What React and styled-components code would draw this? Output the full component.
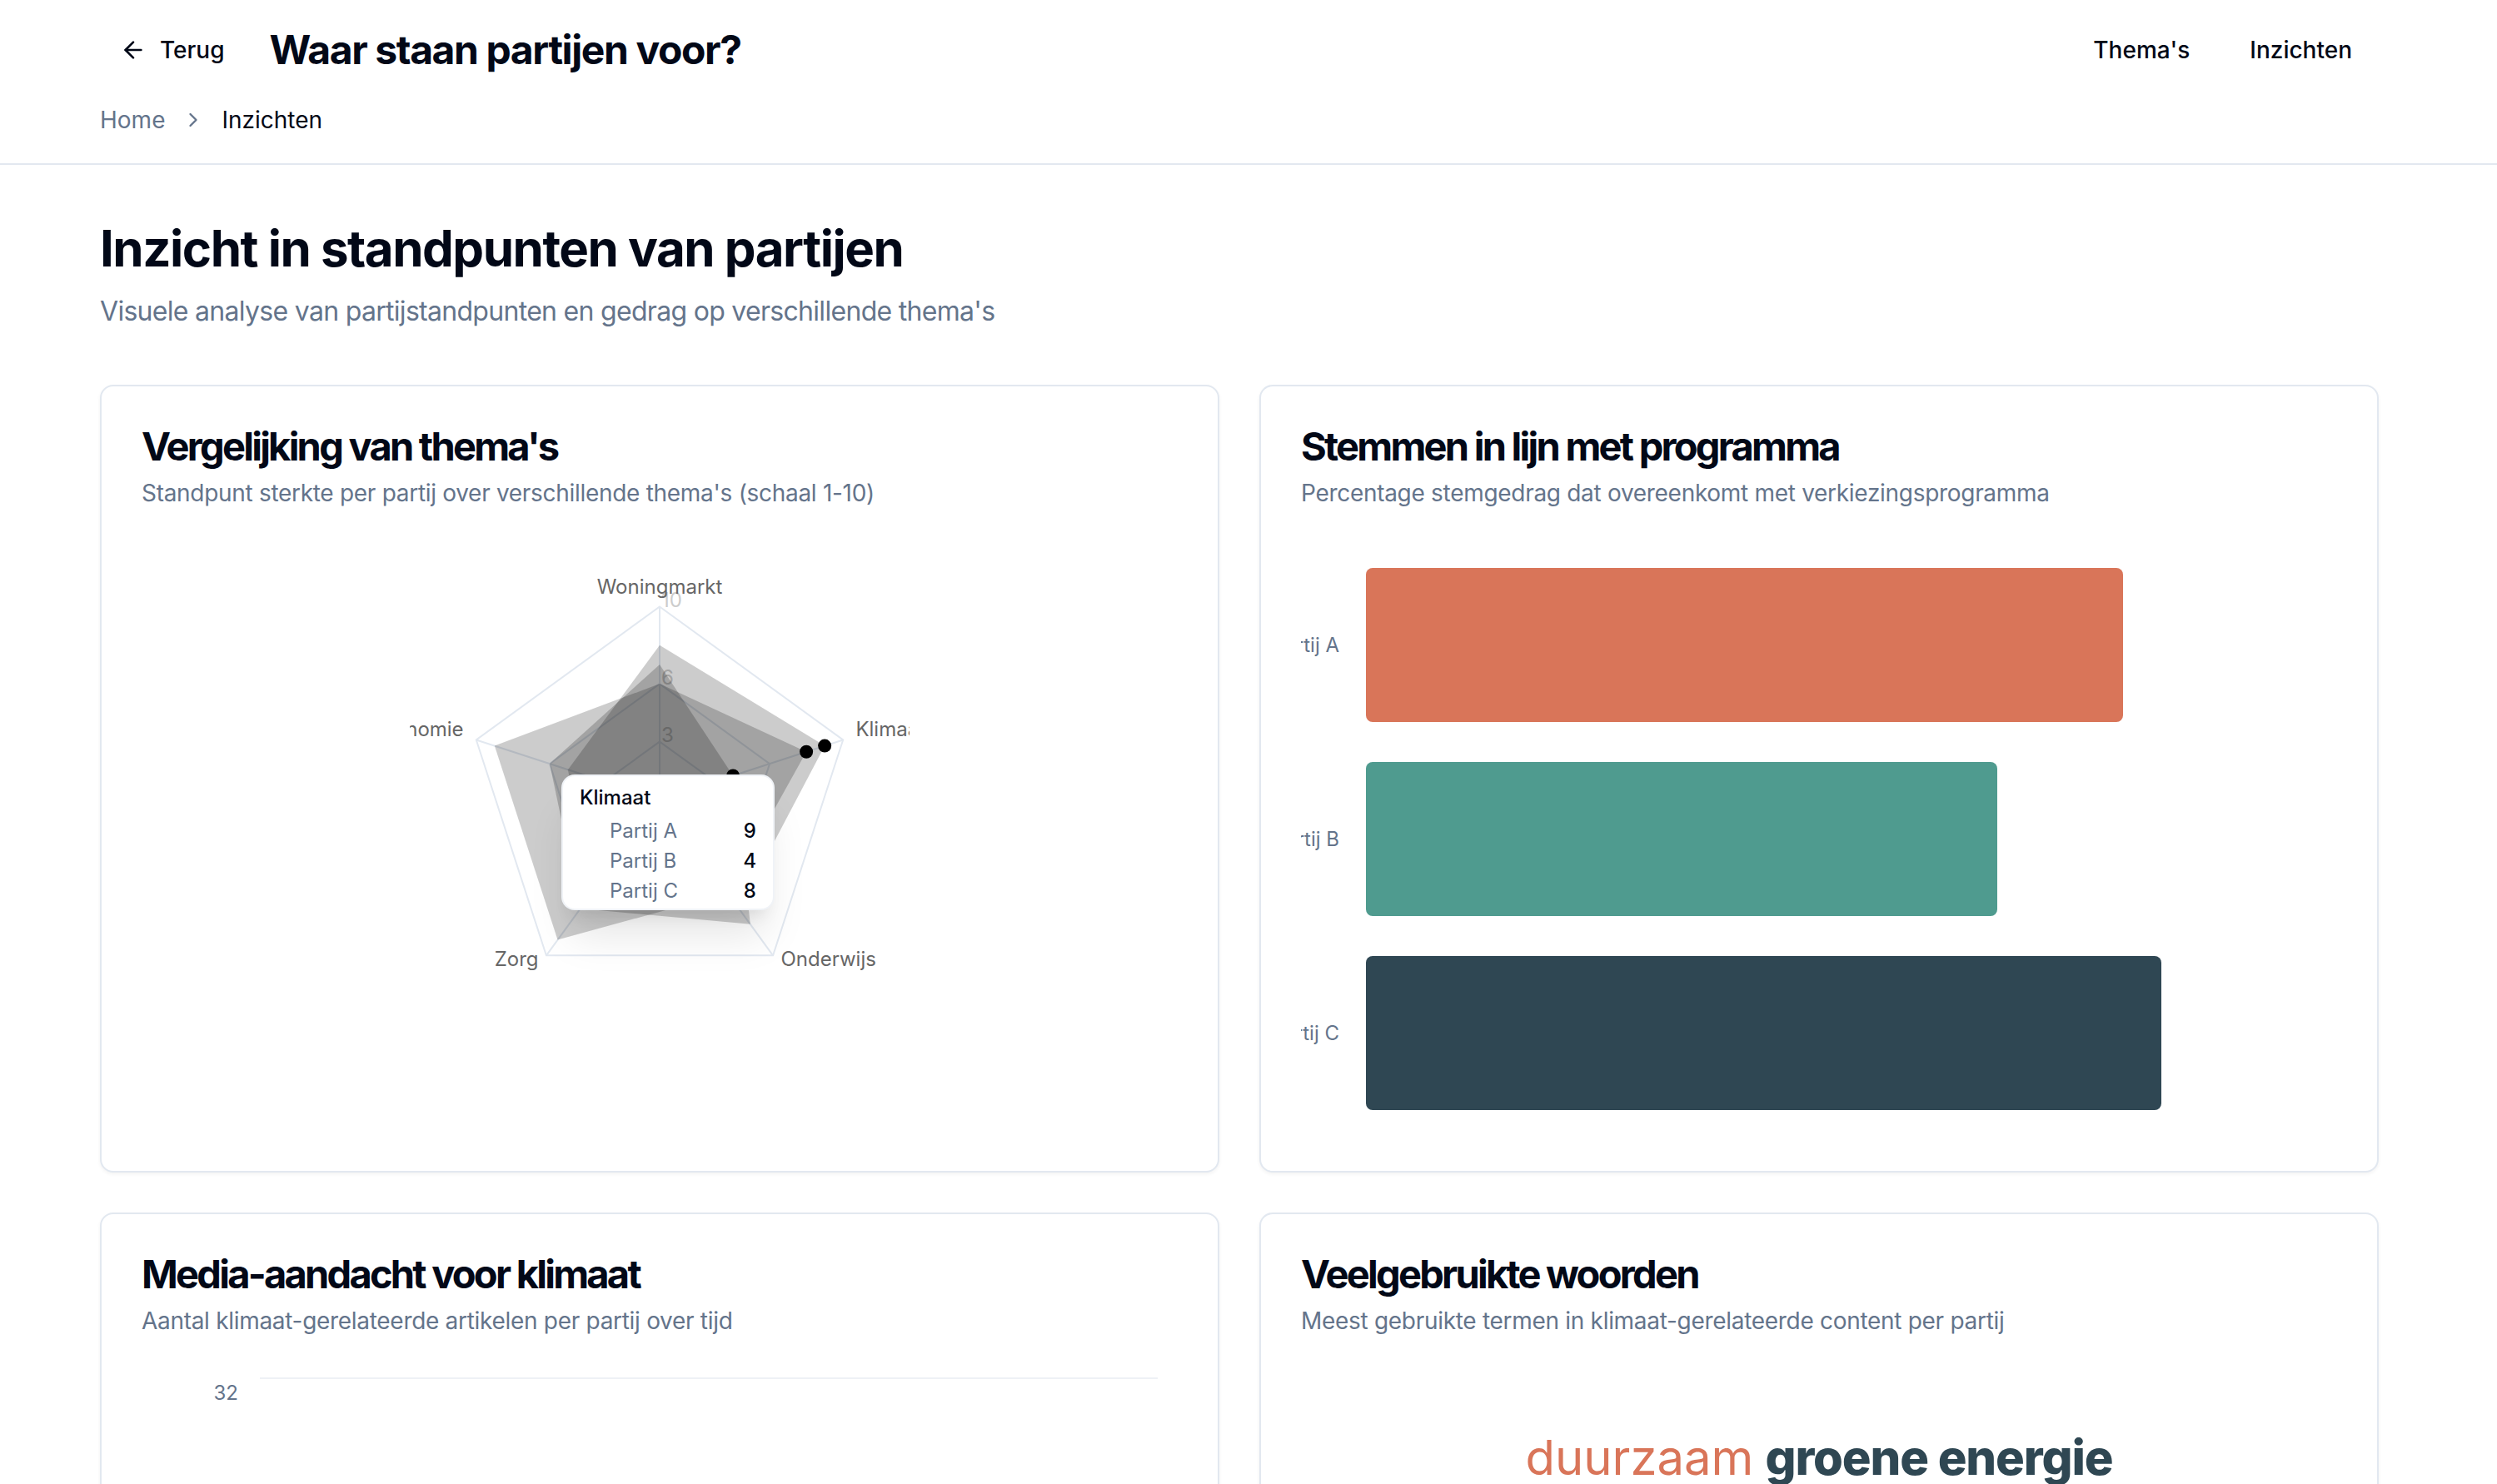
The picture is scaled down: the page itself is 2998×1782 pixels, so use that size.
import React from "react";
import styled, { createGlobalStyle } from "styled-components";

const C = {
  fg: "#020817",
  muted: "#64748b",
  border: "#e2e8f0",
  orange: "#d97559",
  teal: "#4f9b8f",
  slate: "#2f4753",
};

const Global = createGlobalStyle`
  * { box-sizing: border-box; }
  html, body { margin: 0; padding: 0; background: #ffffff; }
  body {
    font-family: Inter, "Noto Sans", "Liberation Sans", sans-serif;
    color: ${C.fg};
    -webkit-font-smoothing: antialiased;
  }
  button { font-family: inherit; }
`;

/* ---------- header ---------- */
const Header = styled.header`
  border-bottom: 2px solid ${C.border};
`;
const HeaderInner = styled.div`
  width: 2736px;
  margin-left: 120px;
  padding: 28px 0 32px;
  display: flex;
  flex-direction: column;
  gap: 32px;
`;
const TopRow = styled.div`
  height: 64px;
  display: flex;
  align-items: center;
  justify-content: space-between;
`;
const LeftGroup = styled.div`
  display: flex;
  align-items: center;
  gap: 30px;
`;
const GhostButton = styled.button`
  display: inline-flex;
  align-items: center;
  gap: 16px;
  height: 72px;
  padding: 0 ${(p) => (p.$wide ? 32 : 24)}px;
  border: none;
  background: transparent;
  border-radius: 12px;
  font-size: 28px;
  font-weight: 500;
  color: ${C.fg};
  cursor: pointer;
`;
const PageTitle = styled.h1`
  margin: 0;
  font-size: 48px;
  line-height: 64px;
  font-weight: 700;
  letter-spacing: -1.4px;
`;
const Nav = styled.nav`
  display: flex;
  align-items: center;
  gap: 8px;
`;
const Crumbs = styled.ol`
  list-style: none;
  margin: 0;
  padding: 0;
  display: flex;
  align-items: center;
  gap: 20px;
  font-size: 28px;
  line-height: 40px;
  color: ${C.muted};
`;
const Crumb = styled.li`
  display: inline-flex;
  align-items: center;
  color: ${(p) => (p.$current ? C.fg : C.muted)};
`;

/* ---------- main ---------- */
const Main = styled.main`
  width: 2736px;
  margin-left: 120px;
  padding: 64px 0 64px;
`;
const Heading = styled.h2`
  margin: 0;
  font-size: 60px;
  line-height: 72px;
  font-weight: 700;
  letter-spacing: -1.5px;
`;
const Lead = styled.p`
  margin: 16px 0 0;
  font-size: 32px;
  line-height: 48px;
  letter-spacing: -0.7px;
  color: ${C.muted};
`;
const Grid = styled.div`
  margin-top: 64px;
  display: grid;
  grid-template-columns: 1fr 1fr;
  gap: 48px;
`;
const Card = styled.section`
  background: #fff;
  border: 2px solid ${C.border};
  border-radius: 16px;
  box-shadow: 0 2px 4px rgba(0, 0, 0, 0.05);
  overflow: hidden;
`;
const CardHeader = styled.div`
  padding: 48px;
  display: flex;
  flex-direction: column;
  gap: 12px;
`;
const CardTitle = styled.h3`
  margin: 0;
  font-size: 47px;
  line-height: 48px;
  font-weight: 700;
  letter-spacing: -2.75px;
`;
const CardDesc = styled.p`
  margin: 0;
  font-size: 28px;
  line-height: 40px;
  letter-spacing: -0.3px;
  color: ${C.muted};
`;
const CardContent = styled.div`
  padding: 0 48px 48px;
`;

/* ---------- radar ---------- */
const RadarBox = styled.div`
  position: relative;
  width: 600px;
  height: 600px;
  margin: 0 auto;
`;
const Tip = styled.div`
  position: absolute;
  left: 182px;
  top: 270px;
  width: 256px;
  padding: 10px 20px 4px;
  background: #fff;
  border: 2px solid rgba(226, 232, 240, 0.5);
  border-radius: 16px;
  box-shadow: 0 40px 50px -10px rgba(0, 0, 0, 0.1),
    0 16px 20px -12px rgba(0, 0, 0, 0.1);
  font-size: 24px;
`;
const TipTitle = styled.div`
  font-weight: 500;
  line-height: 32px;
  color: ${C.fg};
`;
const TipRows = styled.div`
  margin-top: 5px;
`;
const TipRow = styled.div`
  display: flex;
  align-items: center;
  gap: 16px;
  height: 36px;
`;
const TipDot = styled.span`
  width: 20px;
  height: 20px;
  border-radius: 4px;
  background: transparent;
  flex: none;
`;
const TipLabel = styled.span`
  flex: 1;
  color: ${C.muted};
`;
const TipValue = styled.span`
  font-weight: 500;
  font-variant-numeric: tabular-nums;
  color: ${C.fg};
`;

/* ---------- bars / line / cloud ---------- */
const ChartSvg = styled.svg`
  display: block;
  overflow: hidden;
  font-family: Inter, "Noto Sans", sans-serif;
`;
const Cloud = styled.div`
  padding-top: 62px;
  display: flex;
  flex-direction: column;
  align-items: center;
  gap: 8px;
`;
const CloudRow = styled.div`
  display: flex;
  flex-wrap: wrap;
  justify-content: center;
  align-items: baseline;
  gap: 14px;
`;
const Word = styled.span`
  font-size: ${(p) => p.$size}px;
  line-height: 1.2;
  font-weight: ${(p) => p.$weight};
  color: ${(p) => p.$color};
  letter-spacing: ${(p) => p.$track || 0}px;
`;

/* ---------- icons ---------- */
const ArrowLeft = () => (
  <svg width="32" height="32" viewBox="0 0 24 24" fill="none" stroke="currentColor"
    strokeWidth="2" strokeLinecap="round" strokeLinejoin="round">
    <path d="m12 19-7-7 7-7" />
    <path d="M19 12H5" />
  </svg>
);
const ChevronRight = () => (
  <svg width="28" height="28" viewBox="0 0 24 24" fill="none" stroke="currentColor"
    strokeWidth="2" strokeLinecap="round" strokeLinejoin="round">
    <path d="m9 18 6-6-6-6" />
  </svg>
);

/* ---------- radar data ---------- */
const AXES = [
  { name: "Woningmarkt", deg: 90, anchor: "middle" },
  { name: "Klimaat", deg: 18, anchor: "start" },
  { name: "Onderwijs", deg: -54, anchor: "start" },
  { name: "Zorg", deg: -126, anchor: "end" },
  { name: "Economie", deg: 162, anchor: "end" },
];
const SERIES = [
  { name: "Partij A", values: [8, 9, 7, 6, 5] },
  { name: "Partij B", values: [7, 4, 8, 7, 6] },
  { name: "Partij C", values: [6, 8, 6, 9, 9] },
];
const CX = 300;
const CY = 300;
const R = 231.5;
const pt = (r, deg) => {
  const a = (deg * Math.PI) / 180;
  return [CX + r * Math.cos(a), CY - r * Math.sin(a)];
};
const poly = (vals) =>
  vals.map((v, i) => pt((v / 10) * R, AXES[i].deg).map((n) => n.toFixed(1)).join(",")).join(" ");

function RadarChart() {
  const levels = [3, 6, 10];
  return (
    <RadarBox>
      <ChartSvg width="600" height="600" viewBox="0 0 600 600">
        {levels.map((l) => (
          <polygon key={l} points={poly(AXES.map(() => l))} fill="none" stroke={C.border} strokeWidth="2" />
        ))}
        {AXES.map((a) => {
          const [x, y] = pt(R, a.deg);
          return <line key={a.name} x1={CX} y1={CY} x2={x} y2={y} stroke={C.border} strokeWidth="2" />;
        })}
        {[0, 3, 6, 10].map((l) => (
          <text key={l} x={CX + 2} y={CY - (l / 10) * R - 8} fontSize="24" fill="#cccccc"
            dominantBaseline="central">{l}</text>
        ))}
        {SERIES.map((s) => (
          <polygon key={s.name} points={poly(s.values)} fill="#000" fillOpacity="0.2" />
        ))}
        {SERIES.map((s) => {
          const [x, y] = pt((s.values[1] / 10) * R, AXES[1].deg);
          return <circle key={s.name} cx={x} cy={y} r="8" fill="#000" />;
        })}
        {AXES.map((a) => {
          const [x, y] = pt(R + 16, a.deg);
          return (
            <text key={a.name} x={x} y={y} fontSize="24" fill="#666" textAnchor={a.anchor}>
              {a.name}
            </text>
          );
        })}
      </ChartSvg>
      <Tip>
        <TipTitle>Klimaat</TipTitle>
        <TipRows>
          {SERIES.map((s) => (
            <TipRow key={s.name}>
              <TipDot />
              <TipLabel>{s.name}</TipLabel>
              <TipValue>{s.values[1]}</TipValue>
            </TipRow>
          ))}
        </TipRows>
      </Tip>
    </RadarBox>
  );
}

const BARS = [
  { name: "Partij A", w: 909, color: C.orange },
  { name: "Partij B", w: 758, color: C.teal },
  { name: "Partij C", w: 955, color: C.slate },
];

function BarChart() {
  return (
    <ChartSvg width="1244" height="698">
      {BARS.map((b, i) => {
        const y = 22 + i * 233;
        return (
          <g key={b.name}>
            <text x="46" y={y + 92.5} fontSize="24" fill={C.muted} textAnchor="end"
              dominantBaseline="central">{b.name}</text>
            <rect x="78" y={y} width={b.w} height="185" rx="8" fill={b.color} />
          </g>
        );
      })}
    </ChartSvg>
  );
}

function LineChart() {
  const ticks = [32, 24, 16, 8, 0];
  return (
    <ChartSvg width="1244" height="600">
      {ticks.map((t, i) => (
        <g key={t}>
          <line x1="142" x2="1220" y1={1 + i * 140} y2={1 + i * 140} stroke="rgba(226,232,240,0.6)" strokeWidth="2" />
          <text x="116" y={18 + i * 140} fontSize="24" fill={C.muted} textAnchor="end"
            dominantBaseline="central">{t}</text>
        </g>
      ))}
    </ChartSvg>
  );
}

export default function App() {
  return (
    <>
      <Global />
      <Header>
        <HeaderInner>
          <TopRow>
            <LeftGroup>
              <GhostButton>
                <ArrowLeft />
                Terug
              </GhostButton>
              <PageTitle>Waar staan partijen voor?</PageTitle>
            </LeftGroup>
            <Nav>
              <GhostButton $wide>Thema's</GhostButton>
              <GhostButton $wide>Inzichten</GhostButton>
            </Nav>
          </TopRow>
          <Crumbs>
            <Crumb>Home</Crumb>
            <Crumb aria-hidden="true"><ChevronRight /></Crumb>
            <Crumb $current>Inzichten</Crumb>
          </Crumbs>
        </HeaderInner>
      </Header>
      <Main>
        <Heading>Inzicht in standpunten van partijen</Heading>
        <Lead>Visuele analyse van partijstandpunten en gedrag op verschillende thema's</Lead>
        <Grid>
          <Card>
            <CardHeader>
              <CardTitle>Vergelijking van thema's</CardTitle>
              <CardDesc>Standpunt sterkte per partij over verschillende thema's (schaal 1-10)</CardDesc>
            </CardHeader>
            <CardContent>
              <RadarChart />
            </CardContent>
          </Card>
          <Card>
            <CardHeader>
              <CardTitle>Stemmen in lijn met programma</CardTitle>
              <CardDesc>Percentage stemgedrag dat overeenkomt met verkiezingsprogramma</CardDesc>
            </CardHeader>
            <CardContent>
              <BarChart />
            </CardContent>
          </Card>
          <Card>
            <CardHeader>
              <CardTitle>Media-aandacht voor klimaat</CardTitle>
              <CardDesc>Aantal klimaat-gerelateerde artikelen per partij over tijd</CardDesc>
            </CardHeader>
            <CardContent>
              <LineChart />
            </CardContent>
          </Card>
          <Card>
            <CardHeader>
              <CardTitle>Veelgebruikte woorden</CardTitle>
              <CardDesc>Meest gebruikte termen in klimaat-gerelateerde content per partij</CardDesc>
            </CardHeader>
            <CardContent>
              <Cloud>
                <CloudRow>
                  <Word $size={58} $weight={400} $color={C.orange}>duurzaam</Word>
                  <Word $size={58} $weight={800} $color={C.slate} $track={-1.1}>groene energie</Word>
                </CloudRow>
                <CloudRow>
                  <Word $size={44} $weight={600} $color={C.teal}>klimaatbeleid</Word>
                  <Word $size={36} $weight={400} $color={C.orange}>CO2-reductie</Word>
                  <Word $size={40} $weight={700} $color={C.slate}>transitie</Word>
                </CloudRow>
              </Cloud>
            </CardContent>
          </Card>
        </Grid>
      </Main>
    </>
  );
}
